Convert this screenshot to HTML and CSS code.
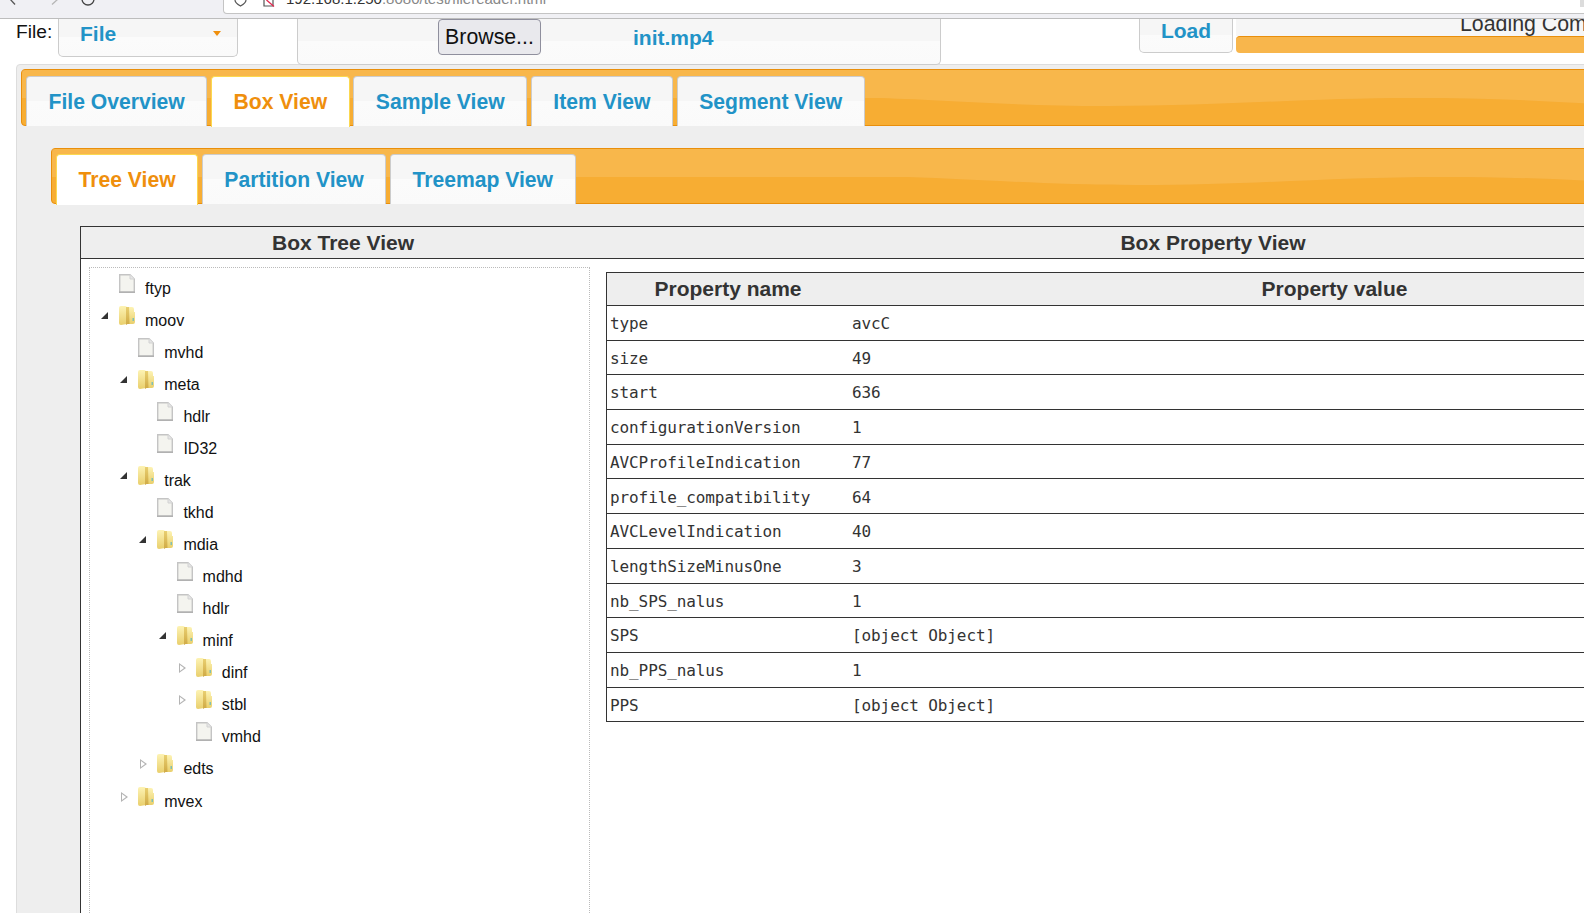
FILE: index.html
```html
<!DOCTYPE html>
<html lang="en">
<head>
  <meta charset="UTF-8">
  <title>File Reader</title>
  <link rel="stylesheet" href="styles.css">
</head>
<body>
  <svg class="defs" width="0" height="0">
    <defs>
      <linearGradient id="folderFill" x1="0" y1="0" x2="0" y2="1">
        <stop offset="0" stop-color="#fdf3b4"/>
        <stop offset="1" stop-color="#e9cf6c"/>
      </linearGradient>
      <linearGradient id="folderDark" x1="0" y1="0" x2="0" y2="1">
        <stop offset="0" stop-color="#e9cf70"/>
        <stop offset="1" stop-color="#cfa945"/>
      </linearGradient>
      <symbol id="doc" viewBox="0 0 16 19">
        <path d="M.7.7H11L15.300 5V18.300H.7Z" fill="#f4f4ef" stroke="#c4c4c4" stroke-width="1.400"/>
        <path d="M11 .7V5H15.300" fill="#e6e6e6" stroke="#d2d2d2"/>
        <path d="M0 18.200H16" stroke="#b0b0b0" stroke-width="1.500"/>
      </symbol>
      <symbol id="folder" viewBox="0 0 16 19">
        <path d="M0 2Q0 0 2 0H6Q8 0 8 2V18L2 19Q0 19 0 17Z" fill="url(#folderFill)"/>
        <path d="M8 1H13Q15 1 15 3V6H16V16Q16 18 14 18H8Z" fill="url(#folderFill)"/>
        <path d="M7 1H10L10.500 18H8.500L7 19Z" fill="url(#folderDark)"/>
        <rect x="13.500" y="12" width="1.500" height="3" fill="#7fbfb4"/>
      </symbol>
    </defs>
  </svg>

  <div class="browser-bar">
    <div class="nav-icons">
      <svg class="nav-back" width="12" height="18" viewBox="0 0 12 18"><path d="M4 -1L9 4.500" fill="none" stroke="#555" stroke-width="1.300"/></svg>
      <svg class="nav-forward" width="12" height="18" viewBox="0 0 12 18"><path d="M9 -1L3 4.500" fill="none" stroke="#b5b5b5" stroke-width="1.300"/></svg>
      <svg class="nav-reload" width="16" height="18" viewBox="0 0 16 18"><circle cx="8" cy="-1" r="6" fill="none" stroke="#444" stroke-width="1.300"/></svg>
    </div>
    <div class="url-field">
      <svg class="url-shield" width="13" height="13" viewBox="0 0 13 13"><path d="M1 -6H12V0Q12 3 6.500 6Q1 3 1 0Z" fill="none" stroke="#555" stroke-width="1.200"/></svg>
      <svg class="url-page" width="12" height="13" viewBox="0 0 12 13"><path d="M1 -6H10V6H1Z" fill="none" stroke="#555" stroke-width="1.200"/><path d="M3.500 0L11 6.500" stroke="#e2264d" stroke-width="1.300"/></svg>
      <span class="url-text">192.168.1.250<span class="url-rest">:8080/test/filereader.html</span></span>
    </div>
    <div class="corner-button"></div>
  </div>

  <div class="page">
    <div class="toolbar">
      <label class="file-label">File:</label>
      <div class="file-menu">File<span class="caret"></span></div>
      <div class="file-picker">
        <button class="browse">Browse...</button>
        <span class="file-name">init.mp4</span>
      </div>
      <button class="load">Load</button>
      <div class="progress">
        <div class="progress-label">Loading Complete</div>
        <div class="progress-bar"></div>
      </div>
    </div>

    <div class="tabs">
      <div class="tab-bar main-bar">
        <svg class="wave" viewBox="0 0 1600 56" preserveAspectRatio="none"><path d="M0 0H1600V36C1520 30 1460 28 1391 28C1280 28 1200 36 1085 36C980 36 900 28 843 28C700 28 400 28 0 28Z" fill="#fff" fill-opacity=".12"/></svg>
        <a class="tab">File Overview</a>
        <a class="tab active">Box View</a>
        <a class="tab">Sample View</a>
        <a class="tab">Item View</a>
        <a class="tab">Segment View</a>
      </div>

      <div class="tab-bar sub-bar">
        <svg class="wave" viewBox="0 0 1600 56" preserveAspectRatio="none"><path d="M0 0H1600V36C1520 30 1460 28 1391 28C1280 28 1200 36 1085 36C980 36 900 28 843 28C700 28 400 28 0 28Z" fill="#fff" fill-opacity=".12"/></svg>
        <a class="tab active">Tree View</a>
        <a class="tab">Partition View</a>
        <a class="tab">Treemap View</a>
      </div>

      <div class="box-view">
        <div class="box-head">
          <div class="tree-head">Box Tree View</div>
          <div class="prop-head">Box Property View</div>
        </div>
        <div class="box-body">
          <div class="tree-pane">
            <ul class="tree" id="tree"></ul>
          </div>
          <div class="prop-pane">
            <table class="props">
              <thead>
                <tr><th class="name-col">Property name</th><th>Property value</th></tr>
              </thead>
              <tbody id="propRows"></tbody>
            </table>
          </div>
        </div>
      </div>
    </div>
  </div>

  <script>
    const boxes = [
      { n: "ftyp" },
      { n: "moov", open: true, kids: [
        { n: "mvhd" },
        { n: "meta", open: true, kids: [{ n: "hdlr" }, { n: "ID32" }] },
        { n: "trak", open: true, kids: [
          { n: "tkhd" },
          { n: "mdia", open: true, kids: [
            { n: "mdhd" },
            { n: "hdlr" },
            { n: "minf", open: true, kids: [
              { n: "dinf", kids: [] },
              { n: "stbl", kids: [] },
              { n: "vmhd" }
            ] }
          ] },
          { n: "edts", kids: [] }
        ] },
        { n: "mvex", kids: [] }
      ] }
    ];

    const props = [
      ["type", "avcC"], ["size", "49"], ["start", "636"],
      ["configurationVersion", "1"], ["AVCProfileIndication", "77"],
      ["profile_compatibility", "64"], ["AVCLevelIndication", "40"],
      ["lengthSizeMinusOne", "3"], ["nb_SPS_nalus", "1"],
      ["SPS", "[object Object]"], ["nb_PPS_nalus", "1"], ["PPS", "[object Object]"]
    ];

    function renderNode(box) {
      let arrow = '<span class="arrow"></span>';
      if (box.kids) arrow = `<span class="arrow ${box.open ? "open" : "closed"}"></span>`;
      const icon = box.kids ? "folder" : "doc";
      const kids = box.open ? `<ul>${box.kids.map(renderNode).join("")}</ul>` : "";
      return `<li><div class="node">${arrow}<svg class="icon"><use href="#${icon}"/></svg><span class="node-name">${box.n}</span></div>${kids}</li>`;
    }

    document.getElementById("tree").innerHTML = boxes.map(renderNode).join("");
    document.getElementById("propRows").innerHTML = props.map(p => `
      <tr><td>${p[0]}</td><td>${p[1]}</td></tr>
    `).join("");
  </script>
</body>
</html>
```

FILE: styles.css
```css
html, body { margin: 0; height: 913px; overflow: hidden; background: #fff; }
body { font-family: "Liberation Sans", Arial, sans-serif; color: #222; width: 1584px; }
.defs { position: absolute; }

/* browser strip, cut off at the top of the shot */
.browser-bar { position: relative; height: 18px; background: #f0f0f4; border-bottom: 1px solid #bdbdbd; display: flex; align-items: flex-start; }
.nav-icons { display: flex; flex: none; width: 223px; padding-left: 6px; box-sizing: border-box; }
.nav-forward { margin-left: 31px; }
.nav-reload { margin-left: 19px; }
.url-field { width: 1400px; height: 13px; flex: none; background: #fff; border: 1px solid #c4c4c4; border-top: none; border-radius: 0 0 4px 4px; display: flex; padding-left: 10px; overflow: hidden; font-size: 15px; line-height: 7px; }
.url-field svg { flex: none; }
.url-page { margin-left: 16px; }
.url-text { color: #333; margin: -5px 0 0 11px; white-space: nowrap; }
.url-rest { color: #888; }
.corner-button { position: absolute; right: 0; top: 0; width: 4px; height: 7px; background: #dcdcdc; }

.page { padding: 0 0 0 16px; width: 1900px; }

.toolbar { height: 45px; display: flex; align-items: flex-start; }
.toolbar > * { flex: none; }
.file-label { font-size: 19.200px; line-height: 20px; margin-top: 3px; width: 42px; color: #111; }
.file-menu { width: 178px; height: 37px; border: 1px solid #ccc; border-top: none; border-radius: 0 0 5px 5px; background: linear-gradient(#f6f6f6, #f6f6f6 50%, #fbfbfb 50%, #fafafa); color: #2293c7; font-weight: bold; font-size: 21px; line-height: 30px; text-indent: 21px; position: relative; }
.caret { position: absolute; right: 16px; top: 12px; border: 4px solid transparent; border-top: 5px solid #ef8f0d; border-bottom: none; }
.file-picker { margin-left: 59px; width: 642px; height: 45px; border: 1px solid #ccc; border-top: none; border-radius: 0 0 5px 5px; background: linear-gradient(#f6f6f6, #f6f6f6 50%, #fbfbfb 50%, #fafafa); display: flex; align-items: flex-start; }
.browse { margin: 0 0 0 140px; width: 103px; height: 36px; border: 1px solid #8f8f9d; border-radius: 4px; background: #e9e9ed; font-family: "Liberation Sans", sans-serif; font-size: 21.300px; color: #111; padding: 1px 0 0; }
.file-name { margin-left: 92px; color: #2293c7; font-weight: bold; font-size: 21px; line-height: 38px; }
.load { margin-left: 198px; width: 94px; height: 34px; border: 1px solid #ccc; border-top: none; border-radius: 0 0 5px 5px; background: linear-gradient(#f6f6f6, #f6f6f6 50%, #fbfbfb 50%, #fafafa); color: #2293c7; font-family: "Liberation Sans", sans-serif; font-weight: bold; font-size: 21px; padding: 0 0 9px; }
.progress { margin-left: 3px; width: 700px; height: 34px; }
.progress-label { height: 17px; line-height: 10px; font-size: 21.330px; color: #333; background: #f6f6f6; padding-left: 224px; overflow: hidden; white-space: nowrap; }
.progress-bar { height: 16px; background: #f8b64c; border-top: 1px solid #e98f0c; border-radius: 4px 0 0 4px; }

/* tab panel */
.tabs { height: 900px; background: #eee; border: 1px solid #ddd; border-radius: 4px 0 0 0; padding: 4px 0 0 4px; }
.tab-bar { position: relative; display: flex; align-items: flex-end; height: 56px; background: #f7ad33; border: 1px solid #e98f0c; border-radius: 4px 0 0 4px; box-sizing: border-box; padding-left: 4px; }
.wave { position: absolute; left: 0; top: 0; width: 1600px; height: 56px; }
.main-bar { height: 57px; }
.sub-bar { margin: 22px 0 0 30px; }

.tab { position: relative; z-index: 1; display: block; box-sizing: border-box; height: 50px; margin: 0 3.700px -1px 0; padding: 0 21.500px; border: 1px solid #ccc; border-bottom: none; border-radius: 4px 4px 0 0; background: linear-gradient(#f6f6f6, #f6f6f6 50%, #fbfbfb 50%, #fafafa); color: #2293c7; font-size: 21.150px; font-weight: bold; line-height: 50px; }
.tab.active { background: #fff; color: #ef8f0d; border-color: #fbd850; height: 51px; margin-bottom: -2px; }

/* box view table */
.box-view { margin: 22px 0 0 59px; width: 1800px; border: 1px solid #333; border-bottom: none; background: #fff; }
.box-head { display: flex; height: 31px; background: #eee; border-bottom: 1px solid #333; font-size: 21px; font-weight: bold; color: #333; line-height: 31px; text-align: center; }
.tree-head { width: 524px; }
.prop-head { width: 1216px; }
.box-body { display: flex; align-items: flex-start; }
.tree-pane { width: 501px; margin: 8px 0 0 8px; height: 700px; border: 1px dotted #bbb; box-sizing: border-box; flex: none; }
.prop-pane { margin: 13px 0 0 16px; }

.tree, .tree ul { list-style: none; margin: 0; padding: 0; }
.tree { padding: 6px 0 0 9px; }
.tree ul { padding-left: 19.200px; }
.node { display: flex; align-items: flex-start; height: 32.040px; font-size: 16px; color: #111; }
.arrow { width: 20px; flex: none; height: 19px; position: relative; }
.arrow.open::after { content: ""; position: absolute; left: 2px; top: 6px; border-style: solid; border-width: 0 0 7px 7px; border-color: transparent transparent #333 transparent; }
.arrow.closed::before { content: ""; position: absolute; left: 3px; top: 5px; border-style: solid; border-width: 5px 0 5px 7px; border-color: transparent transparent transparent #b4b4b4; }
.arrow.closed::after { content: ""; position: absolute; left: 4px; top: 7px; border-style: solid; border-width: 3px 0 3px 4px; border-color: transparent transparent transparent #fff; }
.icon { width: 16px; height: 19px; flex: none; }
.node-name { margin-left: 10px; line-height: 20px; margin-top: 5px; }

.props { width: 1215px; border-collapse: collapse; border: 1px solid #333; }
.props th { height: 32px; padding: 0; background: #eee; font-size: 21px; color: #333; border-bottom: 1px solid #333; }
.props .name-col { width: 242px; }
.props td { height: 32.200px; padding: 1.500px 3px 0; font-family: "DejaVu Sans Mono", monospace; font-size: 16px; letter-spacing: -0.100px; color: #333; border-bottom: 1px solid #333; }
```
